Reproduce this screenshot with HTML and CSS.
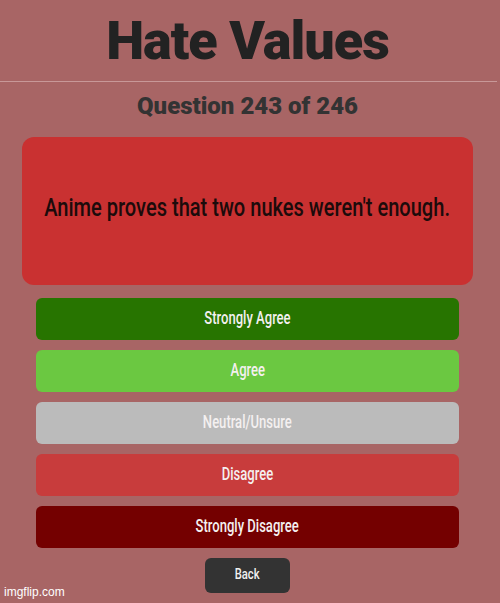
FILE: index.html
```html
<!DOCTYPE html>
<html>
<head>
<meta charset="utf-8">
<link rel="stylesheet" href="styles.css">
</head>
<body>
<div class="page">
  <h1 class="title">Hate Values</h1>
  <div class="rule"></div>
  <h2 class="subtitle">Question 243 of 246</h2>
  <div class="card"><p class="question"><span class="cond">Anime proves that two nukes weren't enough.</span></p></div>
  <div class="answers">
    <button class="btn sa"><span class="cond">Strongly Agree</span></button>
    <button class="btn a"><span class="cond">Agree</span></button>
    <button class="btn n"><span class="cond">Neutral/Unsure</span></button>
    <button class="btn d"><span class="cond">Disagree</span></button>
    <button class="btn sd"><span class="cond">Strongly Disagree</span></button>
  </div>
  <div class="back-row"><button class="back"><span class="cond">Back</span></button></div>
</div>
<div class="watermark">imgflip.com</div>
</body>
</html>
```
FILE: styles.css
```css
html, body { margin: 0; padding: 0; }
body {
  background: #a86565;
  width: 500px;
  height: 603px;
  overflow: hidden;
  position: relative;
  font-family: Roboto, "Liberation Sans", sans-serif;
}
.page { width: 495px; display: flex; flex-direction: column; }
.title {
  margin: 0;
  height: 81px;
  display: flex; align-items: center; justify-content: center;
  font-weight: 900;
  font-size: 54px;
  letter-spacing: -1px;
  color: #222222;
}
.rule { height: 1px; background: #c89898; margin-right: -2px; }
.subtitle {
  margin: 0;
  height: 47px;
  padding-bottom: 8px;
  display: flex; align-items: center; justify-content: center;
  font-weight: 900;
  font-size: 24px;
  color: #333333;
}
.cond {
  display: inline-block;
  white-space: nowrap;
  transform: scaleX(0.725);
  transform-origin: center;
}
.card {
  margin: 0 22px;
  height: 148px;
  border-radius: 12px;
  background: #c93131;
  display: flex; align-items: center; justify-content: center;
}
.question {
  margin: 0 0 9px;
  font-size: 26.5px; font-weight: 500; color: #1c0b0b;
  display: flex; justify-content: center; width: 100%;
}
.question .cond { transform: scaleX(0.757); }
.answers { margin: 13px 36px 0; display: flex; flex-direction: column; gap: 10px; }
.btn {
  height: 42px; border: none; border-radius: 6px;
  font-family: inherit; font-size: 18px; font-weight: 500; color: #f4f0f0;
  padding: 0 0 3px;
  display: flex; align-items: center; justify-content: center;
}
.sa { background: #277400; }
.a { background: #6bc841; }
.n { background: #bbbbbb; }
.d { background: #c83c3c; }
.sd { background: #740000; }
.back-row { margin-top: 10px; display: flex; justify-content: center; }
.back {
  width: 85px; height: 35px; border: none; border-radius: 6px;
  background: #333333; color: #f0f0f0;
  font-family: inherit; font-size: 15.5px; font-weight: 500; padding: 0 0 3px;
  display: flex; align-items: center; justify-content: center;
}
.watermark {
  position: absolute; left: 4px; bottom: 4px;
  font-family: "Liberation Sans", Arial, sans-serif;
  font-size: 12px; color: #ffffff;
}
```
